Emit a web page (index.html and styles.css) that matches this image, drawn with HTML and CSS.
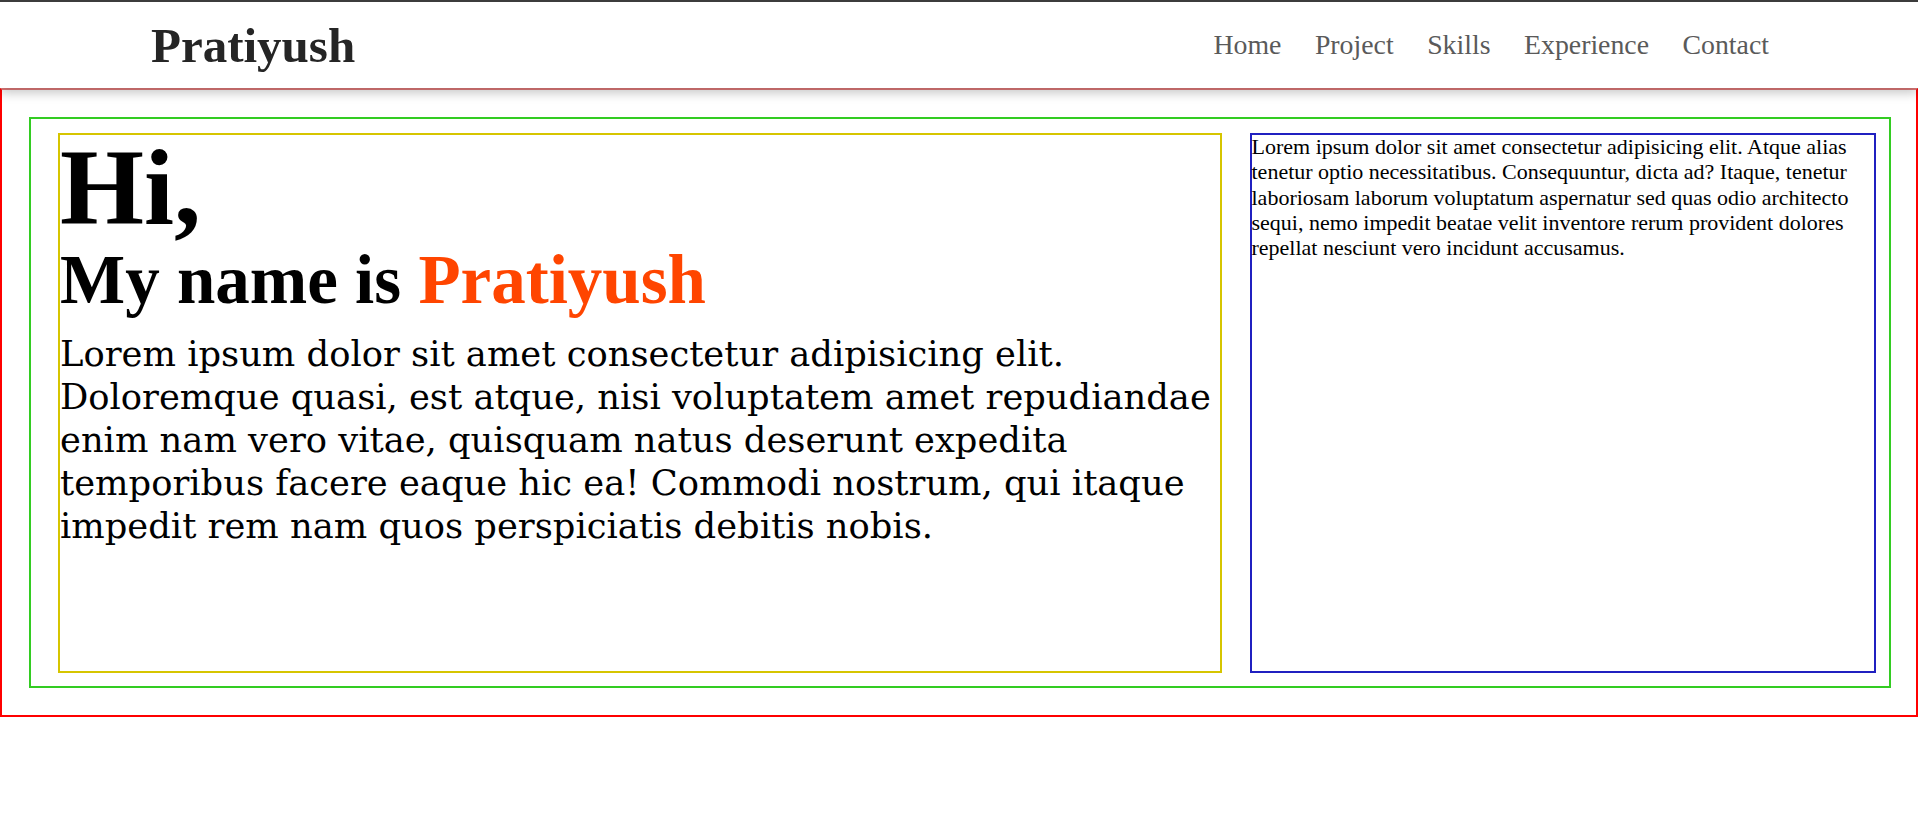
FILE: index.html
```html
<!DOCTYPE html>
<html lang="en">
<head>
<meta charset="utf-8">
<title>Pratiyush</title>
<link rel="stylesheet" href="styles.css">
</head>
<body>
<header class="navbar">
  <div class="logo">Pratiyush</div>
  <nav class="nav-links">
    <a href="#">Home</a>
    <a href="#">Project</a>
    <a href="#">Skills</a>
    <a href="#">Experience</a>
    <a href="#">Contact</a>
  </nav>
</header>
<main class="hero">
  <div class="hero-inner">
    <div class="intro">
      <h1 class="hi">Hi,</h1>
      <h2 class="name">My name is <span class="accent">Pratiyush</span></h2>
      <p class="about">Lorem ipsum dolor sit amet consectetur adipisicing elit. Doloremque quasi, est atque, nisi voluptatem amet repudiandae enim nam vero vitae, quisquam natus deserunt expedita temporibus facere eaque hic ea! Commodi nostrum, qui itaque impedit rem nam quos perspiciatis debitis nobis.</p>
    </div>
    <div class="side">
      <p class="side-text">Lorem ipsum dolor sit amet consectetur adipisicing elit. Atque alias tenetur optio necessitatibus. Consequuntur, dicta ad? Itaque, tenetur laboriosam laborum voluptatum aspernatur sed quas odio architecto sequi, nemo impedit beatae velit inventore rerum provident dolores repellat nesciunt vero incidunt accusamus.</p>
    </div>
  </div>
</main>
</body>
</html>
```
FILE: styles.css
```css
* {
  box-sizing: border-box;
}

body {
  margin: 0;
  background: #ffffff;
  font-family: "Liberation Serif", "Times New Roman", serif;
  color: #000;
}

.navbar {
  position: relative;
  z-index: 1;
  height: 88px;
  border-top: 2px solid #3c3c3c;
  background: #ffffff;
  display: flex;
  align-items: center;
  justify-content: space-between;
  padding: 0 149px 0 151px;
  box-shadow: 0 5px 10px rgba(0, 0, 0, 0.22);
}

.logo {
  font-family: "Liberation Serif", "Times New Roman", serif;
  font-weight: bold;
  font-size: 49px;
  color: #252525;
}

.nav-links {
  display: flex;
  gap: 33.5px;
}

.nav-links a {
  font-family: "Liberation Serif", "Times New Roman", serif;
  font-size: 27.8px;
  color: #5a5a5a;
  text-decoration: none;
}

.hero {
  display: block;
  border: 2px solid #ff0000;
  border-top-color: #e67d7d;
  padding: 27px 25px 27px 27px;
}

.hero-inner {
  border: 2px solid #33cc22;
  padding: 14px 13px 13px 27px;
  display: grid;
  grid-template-columns: 65fr 35fr;
  grid-template-rows: 540px;
  column-gap: 28px;
}

.intro {
  border: 2px solid #d6c500;
  min-width: 0;
}

.side {
  border: 2px solid #2020c0;
  min-width: 0;
}

.hi {
  margin: 0;
  font-family: "Liberation Serif", "Times New Roman", serif;
  font-weight: bold;
  font-size: 108px;
  line-height: 105.8px;
}

.name {
  margin: 0;
  font-family: "Liberation Serif", "Times New Roman", serif;
  font-weight: bold;
  font-size: 69px;
  line-height: 78.8px;
}

.accent {
  color: #ff4500;
}

.about {
  margin: 12px 0 0;
  font-family: "DejaVu Serif", serif;
  font-size: 35.3px;
  line-height: 43px;
}

.side-text {
  margin: -1px 0 0;
  font-family: "Liberation Serif", "Times New Roman", serif;
  font-size: 22px;
  line-height: 1.15;
}
```
